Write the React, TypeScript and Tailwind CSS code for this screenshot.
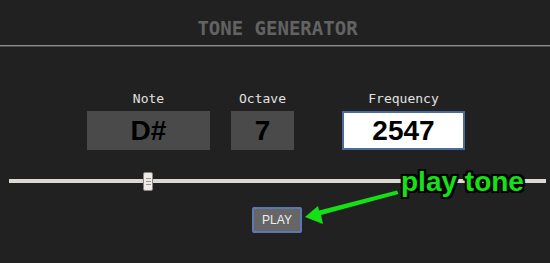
import React from "react";

const fields = [
    { id: "note", label: "Note", value: "D#", width: "w-[123px]", box: "bg-[#4a4a4a]", gap: "mr-[21px]" },
    { id: "octave", label: "Octave", value: "7", width: "w-[63px]", box: "bg-[#4a4a4a]", gap: "mr-[48px]" },
    { id: "freq", label: "Frequency", value: "2547", width: "w-[123px]", box: "bg-white border-2 border-[#4d6a9e]", gap: "" },
];

export default function App() {
    return (
        <div className="relative w-[550px] h-[263px] overflow-hidden bg-[#212121] font-['Liberation_Sans',Arial,sans-serif]">
            {/* Header */}
            <div className="pt-[16px] pl-[5px] text-center">
                <h1 className="font-['DejaVu_Sans_Mono',monospace] font-bold text-[19px] leading-[24px] text-[#636363]">
                    TONE GENERATOR
                </h1>
            </div>
            <div className="mt-[5px] h-[1px] bg-[#8a8a8a]" />
            <div className="h-[1px] bg-[#4e4e4e]" />

            {/* Fields */}
            <div className="mt-[44px] flex justify-center pl-[2px]">
                {fields.map((f) => (
                    <div key={f.id} className={`flex flex-col items-center ${f.width} ${f.gap}`}>
                        <span className="font-['DejaVu_Sans_Mono',monospace] text-[13px] leading-[16px] text-[#e2e2e2]">
                            {f.label}
                        </span>
                        <div className={`mt-[4px] h-[39px] w-full flex items-center justify-center ${f.box}`}>
                            <span className="font-bold text-[28px] leading-none text-black">{f.value}</span>
                        </div>
                    </div>
                ))}
            </div>

            {/* Slider */}
            <div className="mt-[22px] ml-[9px] w-[537px] h-[19px] pt-[7px] relative">
                <div className="h-[4px] bg-[#dcd8d2]" />
                <div className="absolute left-[134px] top-0 w-[10px] h-[19px] rounded-[2px] border border-[#8a8580] bg-[#efece8] flex flex-col items-center justify-center gap-[2px]">
                    <div className="w-[5px] h-[1px] bg-[#9a958f]" />
                    <div className="w-[5px] h-[1px] bg-[#9a958f]" />
                    <div className="w-[5px] h-[1px] bg-[#9a958f]" />
                </div>
            </div>

            {/* Play button */}
            <div className="mt-[16px] flex justify-center pl-[4px]">
                <button className="w-[50px] h-[26px] rounded-[2px] border-2 border-[#5b79b0] bg-[#666666] text-[12px] text-[#eeeeee] flex items-center justify-center">
                    PLAY
                </button>
            </div>

            {/* Annotation */}
            <svg className="absolute left-0 top-0 pointer-events-none" width="550" height="263" viewBox="0 0 550 263">
                <polygon
                    points="397,190.5 398.5,194 321,215 323,224 305,217 318,206 319,210.5"
                    fill="#14e014"
                />
            </svg>
            <span className="absolute left-[401px] top-[168px] font-bold text-[28px] leading-[28px] text-[#16e016] [text-shadow:2px_0_0_#000,-2px_0_0_#000,0_2px_0_#000,0_-2px_0_#000,2px_2px_0_#000,-2px_-2px_0_#000,2px_-2px_0_#000,-2px_2px_0_#000]">
                play tone
            </span>
        </div>
    );
}
